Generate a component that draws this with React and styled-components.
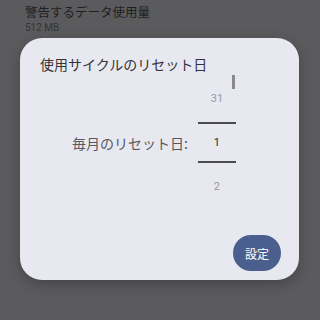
import React from "react";
import styled, { createGlobalStyle } from "styled-components";

const Global = createGlobalStyle`
  html, body { margin: 0; padding: 0; background: #5b5b5d; }
  body { font-family: "Noto Sans CJK JP", "Noto Sans", Roboto, sans-serif; }
`;

const Screen = styled.div`
  position: relative;
  width: 320px;
  height: 320px;
  overflow: hidden;
  background: #5b5b5d;
`;

const ListItem = styled.div`
  display: flex;
  flex-direction: column;
  padding: 4px 0 0 25px;
`;

const ItemTitle = styled.div`
  font-size: 12.5px;
  line-height: 16px;
  color: #1f1f21;
`;

const ItemSub = styled.div`
  font-family: Roboto, "Noto Sans", sans-serif;
  font-size: 10px;
  line-height: 14px;
  margin-top: 1px;
  color: #333335;
`;

const Dialog = styled.div`
  position: absolute;
  top: 38px;
  left: 20px;
  width: 279px;
  height: 242px;
  box-sizing: border-box;
  background: #e8e8f0;
  border-radius: 22px;
  box-shadow: 0 4px 14px rgba(0, 0, 0, 0.25);
  display: flex;
  flex-direction: column;
  padding: 16px 18px 9px 20px;
`;

const Title = styled.div`
  font-size: 14px;
  line-height: 20px;
  color: #34343a;
`;

const Body = styled.div`
  display: flex;
  align-items: center;
  margin-top: 1px;
  padding-left: 32px;
  gap: 10px;
`;

const Label = styled.div`
  font-size: 14px;
  line-height: 20px;
  color: #58585e;
`;

const Picker = styled.div`
  position: relative;
  width: 38px;
  display: flex;
  flex-direction: column;
`;

const Item = styled.div`
  height: ${(p) => (p.$selected ? "41px" : "47px")};
  box-sizing: border-box;
  display: flex;
  align-items: center;
  justify-content: center;
  font-family: Roboto, "Noto Sans", sans-serif;
  font-size: 11px;
  color: ${(p) => (p.$selected ? "#2a2a30" : "#9a9aa0")};
  border-top: ${(p) => (p.$selected ? "2px solid #4a4a50" : "none")};
  border-bottom: ${(p) => (p.$selected ? "2px solid #4a4a50" : "none")};
`;

const ScrollThumb = styled.div`
  position: absolute;
  top: 0;
  right: 1px;
  width: 3px;
  height: 14px;
  background: #8a8a8e;
`;

const Footer = styled.div`
  display: flex;
  justify-content: flex-end;
  margin-top: 25px;
`;

const Button = styled.button`
  width: 48px;
  height: 36px;
  border: none;
  border-radius: 18px;
  background: #4a5f8d;
  color: #ffffff;
  font-family: "Noto Sans CJK JP", sans-serif;
  font-size: 12px;
  padding: 0;
`;

export default function App() {
  return (
    <>
      <Global />
      <Screen>
        <ListItem>
          <ItemTitle>警告するデータ使用量</ItemTitle>
          <ItemSub>512 MB</ItemSub>
        </ListItem>
        <Dialog>
          <Title>使用サイクルのリセット日</Title>
          <Body>
            <Label>毎月のリセット日:</Label>
            <Picker>
              <ScrollThumb />
              <Item>31</Item>
              <Item $selected>1</Item>
              <Item>2</Item>
            </Picker>
          </Body>
          <Footer>
            <Button>設定</Button>
          </Footer>
        </Dialog>
      </Screen>
    </>
  );
}
